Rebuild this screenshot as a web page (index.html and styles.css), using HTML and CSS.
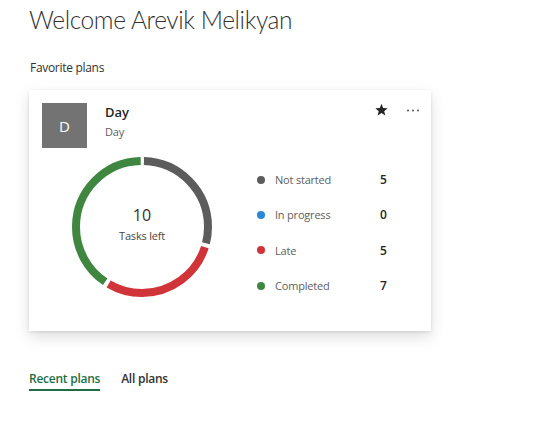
FILE: index.html
```html
<!DOCTYPE html>
<html lang="en">
<head>
<meta charset="utf-8">
<title>Planner</title>
<link rel="stylesheet" href="styles.css">
</head>
<body>
<main class="page">
  <h1 class="welcome">Welcome Arevik Melikyan</h1>
  <h2 class="section-title">Favorite plans</h2>
  <section class="card">
    <div class="card-head">
      <div class="avatar">D</div>
      <div class="plan-info">
        <div class="plan-name">Day</div>
        <div class="plan-sub">Day</div>
      </div>
      <div class="card-actions">
        <svg class="star" width="13" height="13" viewBox="0 0 24 24"><path d="M12 1.5l3.1 7.6 8.2.6-6.3 5.3 2 8L12 18.6 4.9 23l2-8L.7 9.7l8.2-.6z" fill="#252525"/></svg>
        <svg class="more" width="12" height="3" viewBox="0 0 12 3"><circle cx="1" cy="1.5" r="1" fill="#555"/><circle cx="6" cy="1.5" r="1" fill="#555"/><circle cx="11" cy="1.5" r="1" fill="#555"/></svg>
      </div>
    </div>
    <div class="card-body">
      <div class="donut">
        <svg width="140" height="140" viewBox="0 0 140 140">
          <g transform="rotate(-90 70 70)" fill="none" stroke-width="8">
            <circle cx="70" cy="70" r="66" stroke="#5d5c5c" stroke-dasharray="118 400" stroke-dashoffset="-2"/>
            <circle cx="70" cy="70" r="66" stroke="#d13438" stroke-dasharray="118 400" stroke-dashoffset="-124"/>
            <circle cx="70" cy="70" r="66" stroke="#3f8741" stroke-dasharray="166.7 400" stroke-dashoffset="-246"/>
          </g>
        </svg>
        <div class="donut-center">
          <div class="donut-num">10</div>
          <div class="donut-label">Tasks left</div>
        </div>
      </div>
      <ul class="legend">
        <li><span class="dot dot-gray"></span><span class="lbl">Not started</span><span class="val">5</span></li>
        <li><span class="dot dot-blue"></span><span class="lbl">In progress</span><span class="val">0</span></li>
        <li><span class="dot dot-red"></span><span class="lbl">Late</span><span class="val">5</span></li>
        <li><span class="dot dot-green"></span><span class="lbl">Completed</span><span class="val">7</span></li>
      </ul>
    </div>
  </section>
  <nav class="tabs">
    <a class="tab active">Recent plans</a>
    <a class="tab">All plans</a>
  </nav>
</main>
</body>
</html>
```
FILE: styles.css
```css
* { box-sizing: border-box; }
html, body { margin: 0; padding: 0; background: #fff; }
body {
  font-family: "Segoe UI", "Open Sans", "Noto Sans", sans-serif;
  color: #323130;
  width: 541px;
  height: 448px;
  overflow: hidden;
}
.page { padding: 2px 0 0 29px; }
.welcome {
  margin: 0;
  font-family: "Lato", "Open Sans", sans-serif;
  font-size: 24.5px;
  font-weight: 300;
  line-height: 36px;
  letter-spacing: -0.4px;
  color: #323130;
}
.section-title {
  margin: 22px 0 0 1px;
  font-size: 12px;
  font-weight: 400;
  line-height: 16px;
  color: #323130;
  letter-spacing: -0.3px;
}
.card {
  margin-top: 14px;
  width: 402px;
  height: 241px;
  background: #fff;
  box-shadow: 0 6px 14px rgba(0,0,0,0.13), 0 1px 3px rgba(0,0,0,0.11);
  padding: 13px 12px 0 13px;
}
.card-head { display: flex; align-items: flex-start; height: 45px; }
.avatar {
  width: 45px; height: 45px;
  background: #737373;
  color: #fff;
  font-size: 15px;
  display: flex; align-items: center; justify-content: center;
}
.plan-info { margin-left: 18px; flex: 1; padding-top: 0; }
.plan-name { font-size: 13px; font-weight: 600; line-height: 18px; color: #252423; }
.plan-sub { font-size: 11px; line-height: 14px; color: #605e5c; margin-top: 4px; letter-spacing: -0.2px; }
.card-actions { display: flex; align-items: center; gap: 19px; margin-top: 0; }
.card-actions .star { margin-bottom: 2px; }
.card-body { display: flex; align-items: flex-start; margin-top: 8px; }
.donut { position: relative; width: 140px; height: 140px; margin-left: 30px; margin-top: 1px; }
.donut svg { display: block; }
.donut-center {
  position: absolute; inset: 0;
  display: flex; flex-direction: column; align-items: center; justify-content: center;
}
.donut-num { font-size: 16px; line-height: 20px; color: #323130; margin-top: -6px; }
.donut-label { font-size: 11px; line-height: 14px; color: #484644; margin-top: 4px; letter-spacing: -0.2px; }
.legend { list-style: none; margin: 6px 0 0 45px; padding: 0; width: 135px; }
.legend li { display: flex; align-items: center; height: 35.3px; }
.dot { width: 8px; height: 8px; border-radius: 50%; flex: none; }
.dot-gray { background: #5d5c5c; }
.dot-blue { background: #2b88d8; }
.dot-red { background: #d13438; }
.dot-green { background: #3f8741; }
.lbl { font-size: 11px; color: #605e5c; margin-left: 10px; flex: 1; letter-spacing: -0.2px; }
.val { font-size: 12px; font-weight: 600; color: #252423; width: 12px; }
.tabs { display: flex; gap: 21px; margin-top: 39px; }
.tab {
  font-size: 12px; font-weight: 600; color: #323130;
  line-height: 18px; padding-bottom: 1px;
  letter-spacing: -0.25px;
  border-bottom: 2px solid transparent;
}
.tab.active { color: #1f6e43; border-bottom-color: #1f6e43; }
```
